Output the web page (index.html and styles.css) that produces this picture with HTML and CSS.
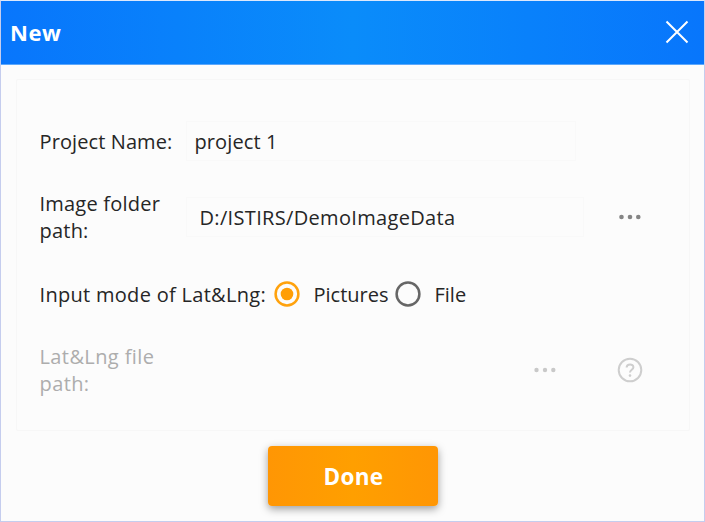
FILE: index.html
```html
<!DOCTYPE html>
<html lang="en">
<head>
<meta charset="utf-8">
<title>New</title>
<link rel="stylesheet" href="styles.css">
</head>
<body>
<main class="dialog">
  <header class="titlebar">
    <h1 class="title">New</h1>
    <button class="close" aria-label="Close"><svg width="24" height="24" viewBox="0 0 24 24"><path d="M1.5 1.5 22.5 22.5M22.5 1.5 1.5 22.5" fill="none" stroke="#fff" stroke-width="2"/></svg></button>
  </header>
  <form class="panel">
    <div class="row">
      <label class="label t-name">Project Name:</label>
      <div class="field field-name">project 1</div>
    </div>
    <div class="row">
      <label class="label t-image">Image folder<br>path:</label>
      <div class="field field-path">D:/ISTIRS/DemoImageData</div>
      <svg class="dots" width="24" height="8" viewBox="0 0 24 8"><g fill="#858585"><circle cx="3.5" cy="4" r="2.3"/><circle cx="12" cy="4" r="2.3"/><circle cx="20.3" cy="4" r="2.3"/></g></svg>
    </div>
    <div class="row row-mode">
      <span class="mode">Input mode of Lat&amp;Lng:</span>
      <svg class="radio" width="26" height="26" viewBox="0 0 26 26"><circle cx="13" cy="13" r="11.4" fill="none" stroke="#ffa20d" stroke-width="2.5"/><circle cx="13" cy="13" r="6.3" fill="#ff9e06"/></svg>
      <span class="choice pictures">Pictures</span>
      <svg class="radio" width="26" height="26" viewBox="0 0 26 26"><circle cx="13" cy="13" r="11.4" fill="none" stroke="#666" stroke-width="2.5"/></svg>
      <span class="choice">File</span>
    </div>
    <div class="row disabled">
      <label class="label t-lat">Lat&amp;Lng file<br>path:</label>
      <svg class="dots-file" width="24" height="8" viewBox="0 0 24 8"><g fill="#c9c9c9"><circle cx="3.5" cy="4" r="2.2"/><circle cx="12" cy="4" r="2.2"/><circle cx="20.3" cy="4" r="2.2"/></g></svg>
      <svg class="help" width="26" height="26" viewBox="0 0 26 26"><g fill="none" stroke="#cecece" stroke-width="2"><circle cx="13" cy="13" r="11.3"/><path d="M9.6 10.5C9.8 6.4 16.4 6.5 16.4 10.2 16.4 12.8 13 12.8 13 15.6"/></g><circle cx="13" cy="18.6" r="1.3" fill="#cecece"/></svg>
    </div>
  </form>
  <button class="done">Done</button>
</main>
</body>
</html>
```
FILE: styles.css
```css
* { box-sizing: border-box; }
body { margin: 0; font-family: "Open Sans", "Noto Sans", sans-serif; }
button { border: 0; padding: 0; font: inherit; }
.dialog {
  width: 705px; height: 522px; overflow: hidden;
  display: flex; flex-direction: column; align-items: center;
  background: #fcfcfc; border: 1px solid #c5cdee; border-top-color: #dce8fc;
}
.titlebar {
  width: 703px; height: 64px; flex: none;
  display: flex; align-items: center; justify-content: space-between;
  padding: 0 15px 2px 9px;
  background: linear-gradient(90deg, #0876fc, #0a8cfa 50%, #0876fc);
  border-bottom: 1px solid #5da8fb;
}
.title { margin: 0; color: #fff; font-size: 22px; font-weight: 700; line-height: 30px; letter-spacing: .6px; }
.close { display: flex; background: none; }
.panel {
  width: 674px; height: 352px; flex: none; margin-top: 14px; padding: 23px 0 0 23px;
  border: 1px solid #f7f7f7; border-radius: 2px; background: #fcfcfc;
}
.row { height: 76px; display: flex; align-items: center; color: #262626; font-size: 20px; line-height: 27px; white-space: nowrap; }
.row-mode { height: 77px; padding-top: 1px; }
.label { width: 146px; flex: none; }
.t-name { letter-spacing: .1px; }
.t-image { letter-spacing: .22px; }
.t-lat { letter-spacing: .4px; }
.field { height: 40px; display: flex; align-items: center; border: 1px solid #f9f9f9; }
.field-name { width: 390px; padding-left: 8px; letter-spacing: .1px; }
.field-path { width: 398px; padding-left: 13px; letter-spacing: .33px; }
.dots { margin-left: 34px; }
.mode { width: 234px; letter-spacing: .3px; }
.choice { margin-left: 14px; }
.pictures { width: 81px; }
.disabled { color: #adadad; }
.dots-file { margin-left: 347px; }
.help { margin-left: 60px; }
.done {
  width: 170px; height: 60px; flex: none; margin-top: 15px; padding-left: 2px; border-radius: 4px;
  color: #fff; font-size: 22.5px; font-weight: 700; letter-spacing: .3px;
  background: linear-gradient(90deg, #ff9604, #ff9f00 50%, #ff9604);
  box-shadow: 0 3px 8px rgba(0, 0, 0, .38);
}
```
